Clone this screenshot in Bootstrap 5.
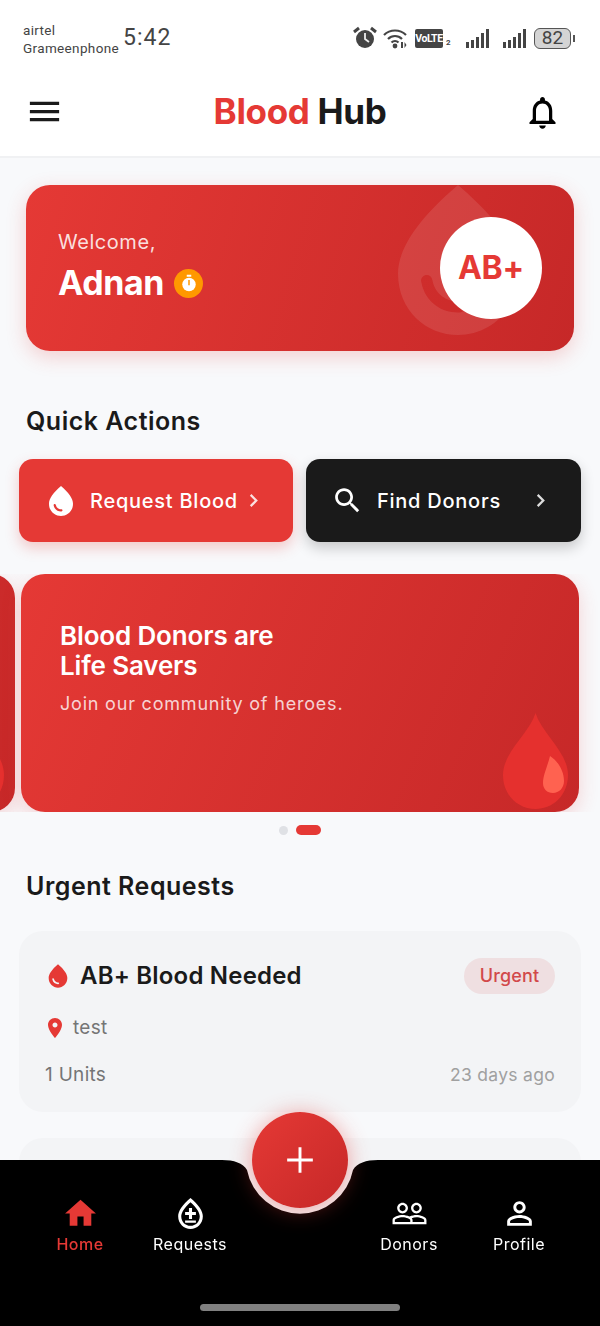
<!DOCTYPE html>
<html lang="en">
<head>
    <meta charset="UTF-8">
    <meta name="viewport" content="width=device-width, initial-scale=1.0">
    <title>Blood Hub</title>
    <link href="https://cdn.jsdelivr.net/npm/bootstrap@5.3.0/dist/css/bootstrap.min.css" rel="stylesheet">
    <style>
        html, body { height: 1326px; overflow: hidden; }
        body { background: #f8f9fb; font-family: Inter, "Liberation Sans", sans-serif; color: #1a1a1a; }

        /* status bar */
        .status-strip { height: 72px; padding: 21px 25px 0 23px; background: #fff; color: #444; font-family: Roboto, sans-serif; }
        .carrier { width: 100px; font-size: 13.5px; line-height: 18px; letter-spacing: .35px; }
        .clock { font-size: 23px; line-height: 34px; letter-spacing: 1px; }
        .status-icons { height: 36px; margin-top: -1px; }
        .alarm-ico { margin-right: 6px; }
        .wifi-ico { margin-right: 7px; }
        .volte { width: 28px; height: 19px; background: #444; color: #fff; border-radius: 2px; font-size: 10.5px; font-weight: 700; line-height: 19px; text-align: center; letter-spacing: -.4px; }
        .sim-no { font-size: 8px; font-weight: 700; margin: 10px 0 0 3px; width: 8px; }
        .sig-first { margin-left: 12px; }
        .sig-second { margin: 0 8px 0 14px; }
        .batt { width: 37px; height: 21px; border: 1.5px solid #555; border-radius: 6px; background: #d4d4d4; font-size: 19px; line-height: 18px; text-align: center; }
        .batt-tip { width: 2px; height: 7px; background: #555; margin-left: 2px; }

        /* app bar */
        .app-head { height: 86px; padding: 0 25px; background: #fff; border-bottom: 2px solid #f0f1f3; }
        .menu-ico { margin-top: -5px; }
        .bell-ico { margin: -4px 13px 0 0; }
        .brand-name { font-size: 35px; font-weight: 700; letter-spacing: -.35px; line-height: 1; margin: -5px 0 0 13px; }
        .tone-red { color: #e53935; }

        /* hero */
        .hero-box { height: 166px; margin: 27px 26px 0; padding: 0 32px; border-radius: 24px; background: linear-gradient(107deg, #e53935, #c62828); box-shadow: 0 6px 20px rgba(229, 57, 53, .22); overflow: hidden; color: #fff; }
        .hero-mark { position: absolute; left: 342px; top: -15px; width: 180px; height: 180px; fill: rgba(255, 255, 255, .1); }
        .hero-text { margin-top: -4px; }
        .hero-welcome { font-size: 20px; line-height: 26px; margin-bottom: 8px; letter-spacing: .55px; color: rgba(255, 255, 255, .85); }
        .hero-name { font-size: 34px; font-weight: 700; line-height: 40px; letter-spacing: -.4px; }
        .name-row { gap: 10px; }
        .clock-badge { width: 29px; height: 29px; border-radius: 50%; background: #ff9800; }
        .group-circle { width: 102px; height: 102px; border-radius: 50%; background: #fff; color: #e53935; font-size: 32px; font-weight: 700; letter-spacing: -.2px; z-index: 1; }

        .block-title { font-size: 25px; font-weight: 600; line-height: 32px; letter-spacing: .5px; margin: 54px 26px 0; }
        .title-urgent { margin: 35px 26px 29px; }

        /* quick actions */
        .quick-row { padding: 0 19px; gap: 13px; margin-top: 22px; }
        .quick-btn { height: 83px; padding: 0 24px; border-radius: 14px; color: #fff; font-size: 20px; font-weight: 500; letter-spacing: .75px; }
        .quick-red { flex: 0 0 274px; background: #e53935; box-shadow: 0 6px 14px rgba(229, 57, 53, .25); }
        .quick-dark { flex: 1 1 0; background: #1a1a1a; box-shadow: 0 6px 14px rgba(0, 0, 0, .2); }
        .chev { fill: rgba(255, 255, 255, .85); }
        .quick-red .chev { margin-right: 1px; }
        .quick-dark .chev { margin-right: 2px; }
        .quick-red .quick-label { margin-left: 11px; }
        .quick-dark .quick-label { margin-left: 13px; }
        .search-ico { margin-left: 1px; }

        /* banners */
        .banner-strip { height: 238px; margin-top: 32px; overflow: hidden; gap: 6px; }
        .slide { flex: 0 0 558px; height: 238px; border-radius: 24px; padding: 47px 39px; background: linear-gradient(113deg, #e53935, #c62828); box-shadow: 0 6px 20px rgba(229, 57, 53, .2); color: #fff; }
        .slide-first { margin-left: -543px; }
        .slide-title { font-size: 26px; font-weight: 600; line-height: 30px; letter-spacing: -.15px; margin: 0 0 10px; }
        .slide-sub { font-size: 18px; line-height: 26px; letter-spacing: .8px; color: rgba(255, 255, 255, .8); margin: 0; }
        .slide-drop { position: absolute; right: 11px; bottom: 3px; width: 65px; height: 96px; }
        .pager { margin-top: 13px; }
        .pager-dot { width: 9px; height: 9px; border-radius: 50%; background: #dfe1e5; }
        .pager-on { width: 25px; height: 10px; border-radius: 5px; background: #e53935; }

        /* request card */
        .req-box { margin: 0 19px; border-radius: 24px; background: #f3f4f6; padding: 26px; height: 181px; }
        .req-box + .req-box { margin-top: 26px; }
        .req-drop { margin-left: -1px; }
        .req-title { font-size: 24px; font-weight: 600; line-height: 36px; letter-spacing: .2px; margin: 1px 0 0 8px; }
        .urgent-pill { width: 91px; height: 36px; border-radius: 18px; background: #efdfe1; color: #d2494a; font-size: 18px; font-weight: 500; letter-spacing: .15px; }
        .req-place { font-size: 19px; line-height: 28px; color: #757575; margin-top: 20px; letter-spacing: .3px; }
        .pin-ico { margin: 0 6px 0 -2px; }
        .req-foot { font-size: 19px; line-height: 28px; color: #757575; margin-top: 19px; letter-spacing: .3px; }
        .req-age { font-size: 17.5px; color: #a0a0a0; }

        /* bottom nav */
        .tab-bar { height: 166px; background: transparent; padding-left: 25px; }
        .tab-shape { position: absolute; left: 0; top: 0; width: 600px; height: 166px; fill: #000; }
        .tab-item { width: 110px; padding-top: 35px; color: #fff; font-size: 16px; line-height: 20px; letter-spacing: .5px; z-index: 1; text-decoration: none; }
        .tab-item svg { fill: #fff; display: block; width: 37px; height: 37px; margin-bottom: 2px; }
        .tab-on { color: #e53935; font-weight: 500; }
        .tab-on svg { fill: #e53935; }
        .tab-gap { width: 109px; }
        .add-fab { position: absolute; left: 252px; top: -48px; width: 96px; height: 96px; border-radius: 50%; border: 0; padding: 0; background: linear-gradient(135deg, #e53935, #c62828); box-shadow: 0 2px 22px rgba(229, 57, 53, .45); z-index: 2; }
        .home-pill { position: absolute; left: 200px; bottom: 15px; width: 200px; height: 7px; border-radius: 4px; background: #808080; }
    </style>
</head>
<body>
    <svg width="0" height="0" class="position-absolute">
        <defs>
            <path id="drop" d="M12 2c-5.33 4.55-8 8.48-8 11.8 0 4.98 3.8 8.2 8 8.2s8-3.22 8-8.2c0-3.32-2.67-7.25-8-11.8zM7.83 14c.37 0 .67.26.74.62.41 2.22 2.28 2.98 3.64 2.87.43-.02.79.32.79.75 0 .4-.32.73-.72.75-2.13.13-4.62-1.09-5.19-4.12-.08-.45.28-.87.74-.87z"/>
            <path id="chevron" d="M9.3 6.3 7.9 7.7 12.2 12l-4.3 4.3 1.4 1.4 5.7-5.7z"/>
            <g id="bars">
                <rect x="0" y="13" width="3" height="6"/>
                <rect x="5" y="11" width="3" height="8"/>
                <rect x="10" y="8" width="3" height="11"/>
                <rect x="15" y="4" width="3" height="15"/>
                <rect x="20" y="0" width="3" height="19"/>
            </g>
            <g id="banner-drop">
                <path fill="#e5302e" d="M32.5 0C39 21 65 39 65 62C65 82 50 96 32.5 96S0 82 0 62C0 39 26 21 32.5 0z"/>
                <path fill="#ff6250" d="M47 43C55 48 61 58 61 68C61 75 56 80 50 80C44 80 40 76 40 70C40 62 44 55 47 43z"/>
            </g>
        </defs>
    </svg>

    <div class="status-strip d-flex align-items-start">
        <div class="carrier">airtel<br>Grameenphone</div>
        <div class="clock">5:42</div>
        <div class="status-icons ms-auto d-flex align-items-center">
            <svg class="alarm-ico" width="24" height="24" viewBox="0 0 24 24"><circle cx="12" cy="13" r="9" fill="#444"/><path d="M1 6 6 2M23 6l-5-4" stroke="#444" stroke-width="3" fill="none"/><path d="M12 7v6l4 3" stroke="#eee" stroke-width="1.8" fill="none"/></svg>
            <svg class="wifi-ico" width="25" height="22" viewBox="0 0 25 22"><g fill="none" stroke="#444" stroke-width="2.2"><path d="M1 8c6-6 16-6 22 0"/><path d="M5 12c4-4 10-4 14 0"/><path d="M8.500 15.500c2-2 5-2 7 0"/></g><circle cx="12" cy="19" r="2.400" fill="#444"/><path d="M18 15h2v6h-2zM21.500 15l2 3h-2zM21.500 21v-3h2z" fill="#444"/></svg>
            <div class="volte">VoLTE</div>
            <div class="sim-no">2</div>
            <svg class="sig-first" width="23" height="19" fill="#444"><use href="#bars"/></svg>
            <svg class="sig-second" width="23" height="19" fill="#444"><use href="#bars"/></svg>
            <div class="batt">82</div>
            <div class="batt-tip"></div>
        </div>
    </div>

    <header class="app-head d-flex align-items-center justify-content-between">
        <svg class="menu-ico" width="39" height="39" viewBox="0 0 24 24" fill="#1a1a1a"><path d="M3 18h18v-2H3v2zm0-5h18v-2H3v2zm0-7v2h18V6H3z"/></svg>
        <div class="brand-name"><span class="tone-red">Blood</span> Hub</div>
        <svg class="bell-ico" width="39" height="39" viewBox="0 0 24 24" fill="#000"><path d="M12 22c1.100 0 2-.9 2-2h-4c0 1.100.9 2 2 2zm6-6v-5c0-3.070-1.630-5.640-4.500-6.320V4c0-.83-.67-1.500-1.500-1.500s-1.500.67-1.500 1.500v.68C7.640 5.360 6 7.920 6 11v5l-2 2v1h16v-1l-2-2zm-2 1H8v-6c0-2.480 1.510-4.500 4-4.500s4 2.020 4 4.500v6z"/></svg>
    </header>

    <main>
        <section class="hero-box position-relative d-flex align-items-center justify-content-between">
            <svg class="hero-mark" viewBox="0 0 24 24"><use href="#drop"/></svg>
            <div class="hero-text">
                <div class="hero-welcome">Welcome,</div>
                <div class="name-row d-flex align-items-center">
                    <span class="hero-name">Adnan</span>
                    <span class="clock-badge d-flex align-items-center justify-content-center">
                        <svg width="18" height="18" viewBox="0 0 24 24"><path d="M9 1h6v2.500H9z" fill="#fff"/><circle cx="12" cy="14" r="9" fill="#fff"/><path d="M11 8h2v7h-2z" fill="#ff9800"/></svg>
                    </span>
                </div>
            </div>
            <div class="group-circle d-flex align-items-center justify-content-center">AB+</div>
        </section>

        <h2 class="block-title">Quick Actions</h2>

        <div class="quick-row d-flex">
            <a class="quick-btn quick-red d-flex align-items-center text-decoration-none">
                <svg width="36" height="36" viewBox="0 0 24 24" fill="#fff"><use href="#drop"/></svg>
                <span class="quick-label flex-grow-1">Request Blood</span>
                <svg class="chev" width="27" height="27" viewBox="0 0 24 24"><use href="#chevron"/></svg>
            </a>
            <a class="quick-btn quick-dark d-flex align-items-center text-decoration-none">
                <svg class="search-ico" width="33" height="33" viewBox="0 0 24 24" fill="#fff"><path d="M15.500 14h-.79l-.28-.27C15.410 12.590 16 11.110 16 9.500 16 5.910 13.090 3 9.500 3S3 5.910 3 9.500 5.910 16 9.500 16c1.610 0 3.090-.59 4.230-1.570l.27.28v.79l5 4.990L20.490 19l-4.990-5zm-6 0C7.010 14 5 11.990 5 9.500S7.010 5 9.500 5 14 7.010 14 9.500 11.990 14 9.500 14z"/></svg>
                <span class="quick-label flex-grow-1">Find Donors</span>
                <svg class="chev" width="27" height="27" viewBox="0 0 24 24"><use href="#chevron"/></svg>
            </a>
        </div>

        <div class="banner-strip d-flex">
            <div class="slide slide-first position-relative">
                <svg class="slide-drop" viewBox="0 0 65 96"><use href="#banner-drop"/></svg>
            </div>
            <div class="slide position-relative">
                <h3 class="slide-title">Blood Donors are<br>Life Savers</h3>
                <p class="slide-sub">Join our community of heroes.</p>
                <svg class="slide-drop" viewBox="0 0 65 96"><use href="#banner-drop"/></svg>
            </div>
        </div>

        <div class="pager d-flex justify-content-center align-items-center gap-2">
            <span class="pager-dot"></span>
            <span class="pager-on"></span>
        </div>

        <h2 class="block-title title-urgent">Urgent Requests</h2>

        <article class="req-box">
            <div class="d-flex align-items-center justify-content-between">
                <div class="d-flex align-items-center">
                    <svg class="req-drop" width="28" height="28" viewBox="0 0 24 24" fill="#e53935"><use href="#drop"/></svg>
                    <h3 class="req-title">AB+ Blood Needed</h3>
                </div>
                <span class="urgent-pill d-flex align-items-center justify-content-center">Urgent</span>
            </div>
            <div class="req-place d-flex align-items-center">
                <svg class="pin-ico" width="24" height="24" viewBox="0 0 24 24" fill="#e53935"><path d="M12 2C8.130 2 5 5.130 5 9c0 5.250 7 13 7 13s7-7.750 7-13c0-3.870-3.130-7-7-7zm0 9.500c-1.380 0-2.500-1.120-2.500-2.500s1.120-2.500 2.500-2.500 2.500 1.120 2.500 2.500-1.120 2.500-2.500 2.500z"/></svg>
                test
            </div>
            <div class="req-foot d-flex align-items-center justify-content-between">
                <span>1 Units</span>
                <span class="req-age">23 days ago</span>
            </div>
        </article>
        <article class="req-box"></article>
    </main>

    <nav class="tab-bar fixed-bottom d-flex align-items-start">
        <svg class="tab-shape" viewBox="0 0 600 166"><path d="M0 0H222C234 0 243 3 247 10A54 54 0 0 0 353 10C357 3 366 0 378 0H600V166H0z"/></svg>
        <a class="tab-item tab-on d-flex flex-column align-items-center">
            <svg viewBox="0 0 24 24"><path d="M10 20v-6h4v6h5v-8h3L12 3 2 12h3v8z"/></svg>
            Home
        </a>
        <a class="tab-item d-flex flex-column align-items-center">
            <svg viewBox="0 0 24 24"><path d="M12 2c-5.330 4.550-8 8.480-8 11.800 0 4.980 3.800 8.200 8 8.200s8-3.220 8-8.200c0-3.320-2.670-7.250-8-11.800zm0 18c-3.350 0-6-2.570-6-6.200 0-2.340 1.950-5.440 6-9.140 4.050 3.700 6 6.800 6 9.140 0 3.630-2.650 6.200-6 6.200z"/><path d="M11 8.500h2V11h2.500v2H13v2.500h-2V13H8.500v-2H11zM8.500 16.500h7v1.500h-7z"/></svg>
            Requests
        </a>
        <div class="tab-gap"></div>
        <a class="tab-item d-flex flex-column align-items-center">
            <svg viewBox="0 0 24 24"><path d="M16.500 13c-1.200 0-3.070.34-4.500 1-1.430-.67-3.300-1-4.500-1C5.330 13 1 14.080 1 16.250V19h22v-2.750c0-2.170-4.330-3.250-6.500-3.250zm-4 4.500h-10v-1.250c0-.54 2.560-1.750 5-1.750s5 1.210 5 1.750v1.250zm9 0H14v-1.250c0-.46-.2-.86-.52-1.220.88-.3 1.960-.53 3.020-.53 2.440 0 5 1.210 5 1.750v1.250zM7.500 12c1.930 0 3.500-1.570 3.500-3.500S9.430 5 7.500 5 4 6.570 4 8.500 5.570 12 7.500 12zm0-5.500c1.100 0 2 .9 2 2s-.9 2-2 2-2-.9-2-2 .9-2 2-2zm9 5.500c1.930 0 3.500-1.570 3.500-3.500S18.430 5 16.500 5 13 6.570 13 8.500s1.570 3.500 3.500 3.500zm0-5.500c1.100 0 2 .9 2 2s-.9 2-2 2-2-.9-2-2 .9-2 2-2z"/></svg>
            Donors
        </a>
        <a class="tab-item d-flex flex-column align-items-center">
            <svg viewBox="0 0 24 24"><path d="M12 5.900c1.160 0 2.100.94 2.100 2.100s-.94 2.100-2.100 2.100S9.900 9.160 9.900 8s.94-2.100 2.100-2.100m0 9c2.970 0 6.100 1.460 6.100 2.100v1.100H5.900V17c0-.64 3.130-2.100 6.100-2.100M12 4C9.790 4 8 5.790 8 8s1.790 4 4 4 4-1.790 4-4-1.790-4-4-4zm0 9c-2.670 0-8 1.340-8 4v3h16v-3c0-2.660-5.330-4-8-4z"/></svg>
            Profile
        </a>
        <button class="add-fab d-flex align-items-center justify-content-center" type="button" aria-label="Add">
            <svg width="44" height="44" viewBox="0 0 24 24" fill="#fff"><path d="M11.200 5h1.600v6.200H19v1.600h-6.200V19h-1.600v-6.200H5v-1.600h6.200z"/></svg>
        </button>
        <div class="home-pill"></div>
    </nav>

    <script src="https://cdn.jsdelivr.net/npm/bootstrap@5.3.0/dist/js/bootstrap.bundle.min.js"></script>
</body>
</html>
